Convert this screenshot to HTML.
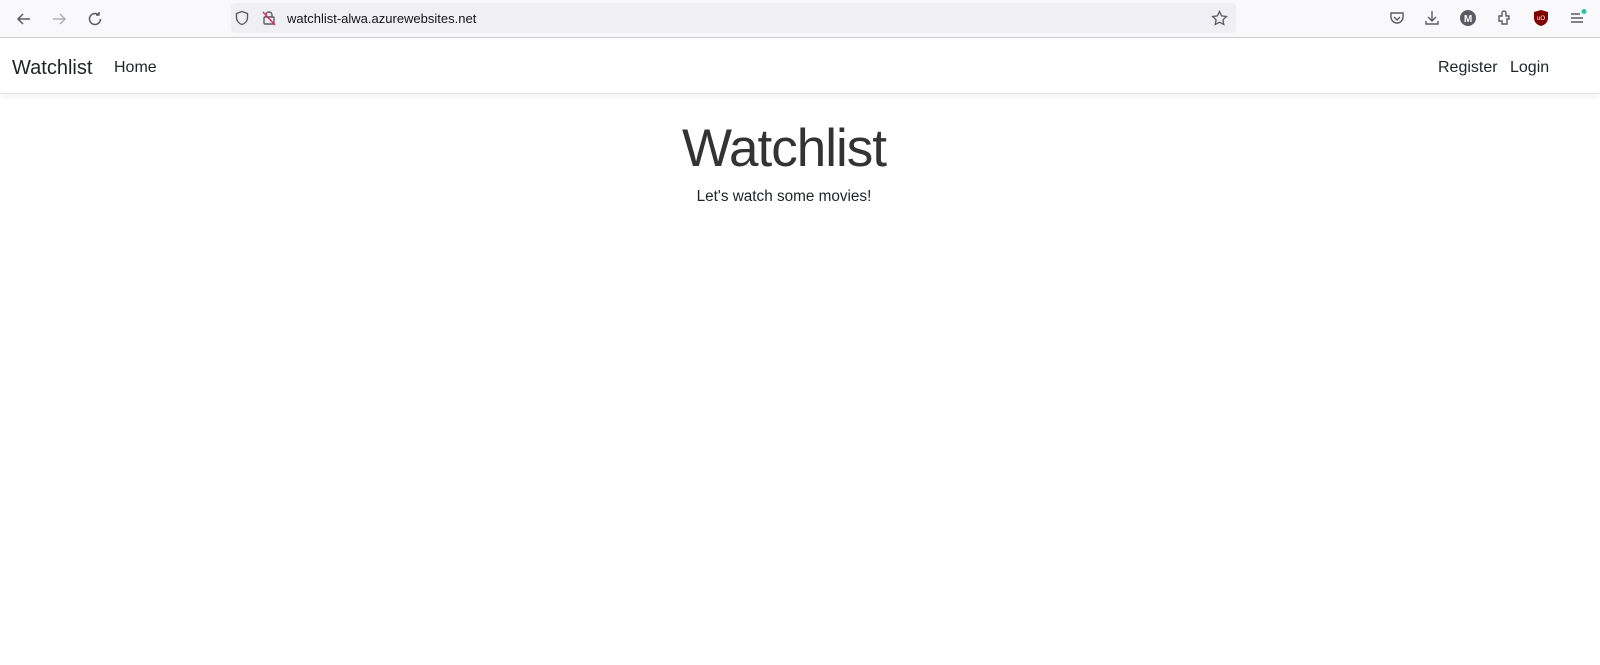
<!DOCTYPE html>
<html><head><meta charset="utf-8"><style>
body{margin:0;width:1600px;height:665px;background:#fff;font-family:"Liberation Sans",sans-serif;color:#212529;overflow:hidden;position:relative}
.tb{position:absolute;top:0;left:0;width:1600px;height:37px;background:#f9f9fb;border-bottom:1px solid #cfcfd8}
.url{position:absolute;left:231px;top:3px;width:1005px;height:30px;background:#f0f0f4;border-radius:4px}
.url span{position:absolute;left:56px;top:8px;font-size:13px;color:#15141a}
svg{position:absolute}
.nav{position:absolute;top:38px;left:0;width:1600px;height:55px;border-bottom:1px solid #dee2e6;box-shadow:0 2px 6px rgba(0,0,0,.06)}
.nav a{position:absolute;top:21px;font-size:16px;color:#212529}
</style></head><body>
<div class="tb">
<svg style="left:15px;top:10px" width="18" height="18" viewBox="0 0 18 18" fill="none" stroke="#5b5b66" stroke-width="1.5"><path d="M15 9H3M8 4L3 9l5 5"/></svg>
<svg style="left:50px;top:10px" width="18" height="18" viewBox="0 0 18 18" fill="none" stroke="#b0b0b8" stroke-width="1.5"><path d="M3 9h12M10 4l5 5-5 5"/></svg>
<svg style="left:86px;top:10px" width="18" height="18" viewBox="0 0 18 18" fill="none" stroke="#5b5b66" stroke-width="1.5"><path d="M14.5 9A5.5 5.5 0 1 1 12 4.4M13 2v3h-3"/></svg>
<div class="url"><span>watchlist-alwa.azurewebsites.net</span>
<svg style="left:3px;top:7px" width="16" height="16" viewBox="0 0 16 16" fill="none" stroke="#5b5b66" stroke-width="1.4"><path d="M8 1.5L2.5 3.5v4c0 3.5 2.5 6 5.5 7 3-1 5.5-3.5 5.5-7v-4z"/></svg>
<svg style="left:30px;top:7px" width="16" height="16" viewBox="0 0 16 16" fill="none" stroke="#5b5b66" stroke-width="1.4"><rect x="3" y="7" width="10" height="7" rx="1"/><path d="M5 7V5a3 3 0 0 1 6 0v2"/><path d="M2 2l12 13" stroke="#e22850"/></svg>
<svg style="left:980px;top:7px" width="17" height="17" viewBox="0 0 17 17" fill="none" stroke="#5b5b66" stroke-width="1.3"><path d="M8.5 1.5l2.1 4.4 4.8.6-3.5 3.3.9 4.7-4.3-2.3-4.3 2.3.9-4.7L1.6 6.5l4.8-.6z"/></svg>
</div>
<svg style="left:1389px;top:10px" width="16" height="16" viewBox="0 0 16 16" fill="none" stroke="#5b5b66" stroke-width="1.4"><path d="M2 3h12v4a6 6 0 0 1-12 0z"/><path d="M5 7l3 3 3-3"/></svg>
<svg style="left:1424px;top:9px" width="16" height="17" viewBox="0 0 16 17" fill="none" stroke="#5b5b66" stroke-width="1.4"><path d="M8 2v10M4 8l4 4 4-4M2 12v3h12v-3"/></svg>
<svg style="left:1460px;top:10px" width="16" height="16" viewBox="0 0 16 16"><circle cx="8" cy="8" r="8" fill="#5b5b66"/><text x="8" y="12" font-size="10" font-weight="bold" fill="#fff" text-anchor="middle" font-family="Liberation Sans">M</text></svg>
<svg style="left:1497px;top:9px" width="16" height="17" viewBox="0 0 16 17" fill="none" stroke="#5b5b66" stroke-width="1.4"><path d="M2 7h3V4a2 2 0 0 1 4 0v3h3v3h-2v5H5v-3H2z"/></svg>
<svg style="left:1533px;top:9px" width="16" height="18" viewBox="0 0 16 18"><path d="M8 1L1 3v6c0 4 3 7 7 8 4-1 7-4 7-8V3z" fill="#800000"/><text x="8" y="11" font-size="6" fill="#fff" text-anchor="middle" font-family="Liberation Sans">uO</text></svg>
<svg style="left:1569px;top:8px" width="18" height="18" viewBox="0 0 18 18" fill="none" stroke="#5b5b66" stroke-width="1.4"><path d="M2 6h9M2 10h12M2 14h12"/><circle cx="15" cy="3.5" r="2.5" fill="#2ac3a2" stroke="none"/></svg>
</div>
<div class="nav">
<a style="left:12px;top:19px;font-size:20px">Watchlist</a>
<a style="left:114px">Home</a>
<a style="left:1438px">Register</a>
<a style="left:1510px">Login</a>
</div>
<div style="position:absolute;top:118px;left:0;width:1568px;text-align:center;font-size:53px;font-weight:300;letter-spacing:-1px;color:#333">Watchlist</div>
<div style="position:absolute;top:188px;left:0;width:1568px;text-align:center;font-size:15.3px">Let's watch some movies!</div>
</body></html>
